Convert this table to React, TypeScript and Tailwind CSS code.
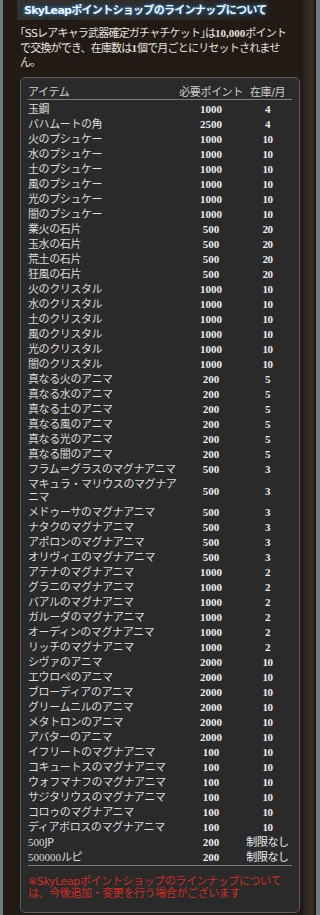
import React from "react";

const rows: [string, string, string][] = [
  ["玉鋼", "1000", "4"],
  ["バハムートの角", "2500", "4"],
  ["火のプシュケー", "1000", "10"],
  ["水のプシュケー", "1000", "10"],
  ["土のプシュケー", "1000", "10"],
  ["風のプシュケー", "1000", "10"],
  ["光のプシュケー", "1000", "10"],
  ["闇のプシュケー", "1000", "10"],
  ["業火の石片", "500", "20"],
  ["玉水の石片", "500", "20"],
  ["荒土の石片", "500", "20"],
  ["狂風の石片", "500", "20"],
  ["火のクリスタル", "1000", "10"],
  ["水のクリスタル", "1000", "10"],
  ["土のクリスタル", "1000", "10"],
  ["風のクリスタル", "1000", "10"],
  ["光のクリスタル", "1000", "10"],
  ["闇のクリスタル", "1000", "10"],
  ["真なる火のアニマ", "200", "5"],
  ["真なる水のアニマ", "200", "5"],
  ["真なる土のアニマ", "200", "5"],
  ["真なる風のアニマ", "200", "5"],
  ["真なる光のアニマ", "200", "5"],
  ["真なる闇のアニマ", "200", "5"],
  ["フラム＝グラスのマグナアニマ", "500", "3"],
  ["マキュラ・マリウスのマグナアニマ", "500", "3"],
  ["メドゥーサのマグナアニマ", "500", "3"],
  ["ナタクのマグナアニマ", "500", "3"],
  ["アポロンのマグナアニマ", "500", "3"],
  ["オリヴィエのマグナアニマ", "500", "3"],
  ["アテナのマグナアニマ", "1000", "2"],
  ["グラニのマグナアニマ", "1000", "2"],
  ["バアルのマグナアニマ", "1000", "2"],
  ["ガルーダのマグナアニマ", "1000", "2"],
  ["オーディンのマグナアニマ", "1000", "2"],
  ["リッチのマグナアニマ", "1000", "2"],
  ["シヴァのアニマ", "2000", "10"],
  ["エウロペのアニマ", "2000", "10"],
  ["ブローディアのアニマ", "2000", "10"],
  ["グリームニルのアニマ", "2000", "10"],
  ["メタトロンのアニマ", "2000", "10"],
  ["アバターのアニマ", "2000", "10"],
  ["イフリートのマグナアニマ", "100", "10"],
  ["コキュートスのマグナアニマ", "100", "10"],
  ["ウォフマナフのマグナアニマ", "100", "10"],
  ["サジタリウスのマグナアニマ", "100", "10"],
  ["コロゥのマグナアニマ", "100", "10"],
  ["ディアボロスのマグナアニマ", "100", "10"],
  ["500JP", "200", "制限なし"],
  ["500000ルピ", "200", "制限なし"],
];

const num = "font-['Liberation_Serif',serif] font-bold";

function ItemName({ name }: { name: string }) {
  const m = name.match(/^(\d+)(.*)$/);
  if (m) {
    return (
      <>
        <span className="font-['Liberation_Serif',serif] tracking-normal">{m[1]}</span>
        {m[2]}
      </>
    );
  }
  return <>{name}</>;
}

function Stock({ v }: { v: string }) {
  if (/^\d+$/.test(v)) return <span className={num}>{v}</span>;
  return <span>{v}</span>;
}

export default function App() {
  return (
    <div className="w-[320px] min-h-[915px] bg-[#6f7c82] flex font-['DejaVu_Sans','Noto_Sans_CJK_JP',sans-serif]">
      <div className="ml-[3px] flex-1 flex bg-[#211a15]">
        <div className="flex-1 flex flex-col">
          {/* title */}
          <div className="h-[20px] ml-[14px] mr-[20px] flex items-center pl-[7px] bg-[linear-gradient(to_right,#34312d,#2c2925_70%,#211a15)]">
            <span className="whitespace-nowrap text-[11px] tracking-[-0.7px] font-bold text-[#eef6ff] leading-none [text-shadow:0_0_3px_#3b8fd9,0_0_6px_#1e5fa0]">
              SkyLeapポイントショップのラインナップについて
            </span>
          </div>
          {/* intro */}
          <p className="mt-[6px] ml-[17px] text-[11px] leading-[14px] tracking-[-0.8px] text-[#e4e2df] whitespace-nowrap">
            <span className="[font-feature-settings:'halt']">「</span>SSレアキャラ武器確定ガチャチケット
            <span className="[font-feature-settings:'halt']">」</span>は
            <span className={`${num} tracking-normal`}>10,000</span>ポイント
            <br />
            で交換ができ、在庫数は<span className={`${num} tracking-normal`}>1</span>個で月ごとにリセットされませ
            <br />
            ん。
          </p>
          {/* table box */}
          <div className="mt-[7px] ml-[17px] w-[280px] rounded-[5px] border border-[#5c5c5c] bg-[#2a2a2a] px-[7px] pt-[7px] pb-[12px] text-[11px] tracking-[-0.4px] text-[#dcdcdc]">
            <div className="flex items-center h-[15px] leading-[13px] border-b border-[#7c7c7c] text-[#cfcfcf]">
              <div className="w-[151px] shrink-0">アイテム</div>
              <div className="w-[64px] shrink-0 text-center">必要ポイント</div>
              <div className="flex-1 text-center">在庫/月</div>
            </div>
            <div className="pt-[2px] border-b border-[#7c7c7c]">
              {rows.map(([name, pts, stock]) => (
                <div key={name} className="flex items-center py-px leading-[13px]">
                  <div className="w-[151px] shrink-0">
                    <ItemName name={name} />
                  </div>
                  <div className={`w-[64px] shrink-0 text-center tracking-normal text-[#ececec] ${num}`}>{pts}</div>
                  <div className="flex-1 text-center text-[#ececec]">
                    <Stock v={stock} />
                  </div>
                </div>
              ))}
            </div>
            <p className="pt-[10px] leading-[12px] text-[#d42a24] whitespace-nowrap">
              ※SkyLeapポイントショップのラインナップについて
              <br />
              は、今後追加・変更を行う場合がございます
            </p>
          </div>
        </div>
        <div className="w-[13px] bg-[linear-gradient(to_right,#271f19,#3a3027_75%,#15110d)]" />
      </div>
      <div className="w-[4px]" />
    </div>
  );
}
